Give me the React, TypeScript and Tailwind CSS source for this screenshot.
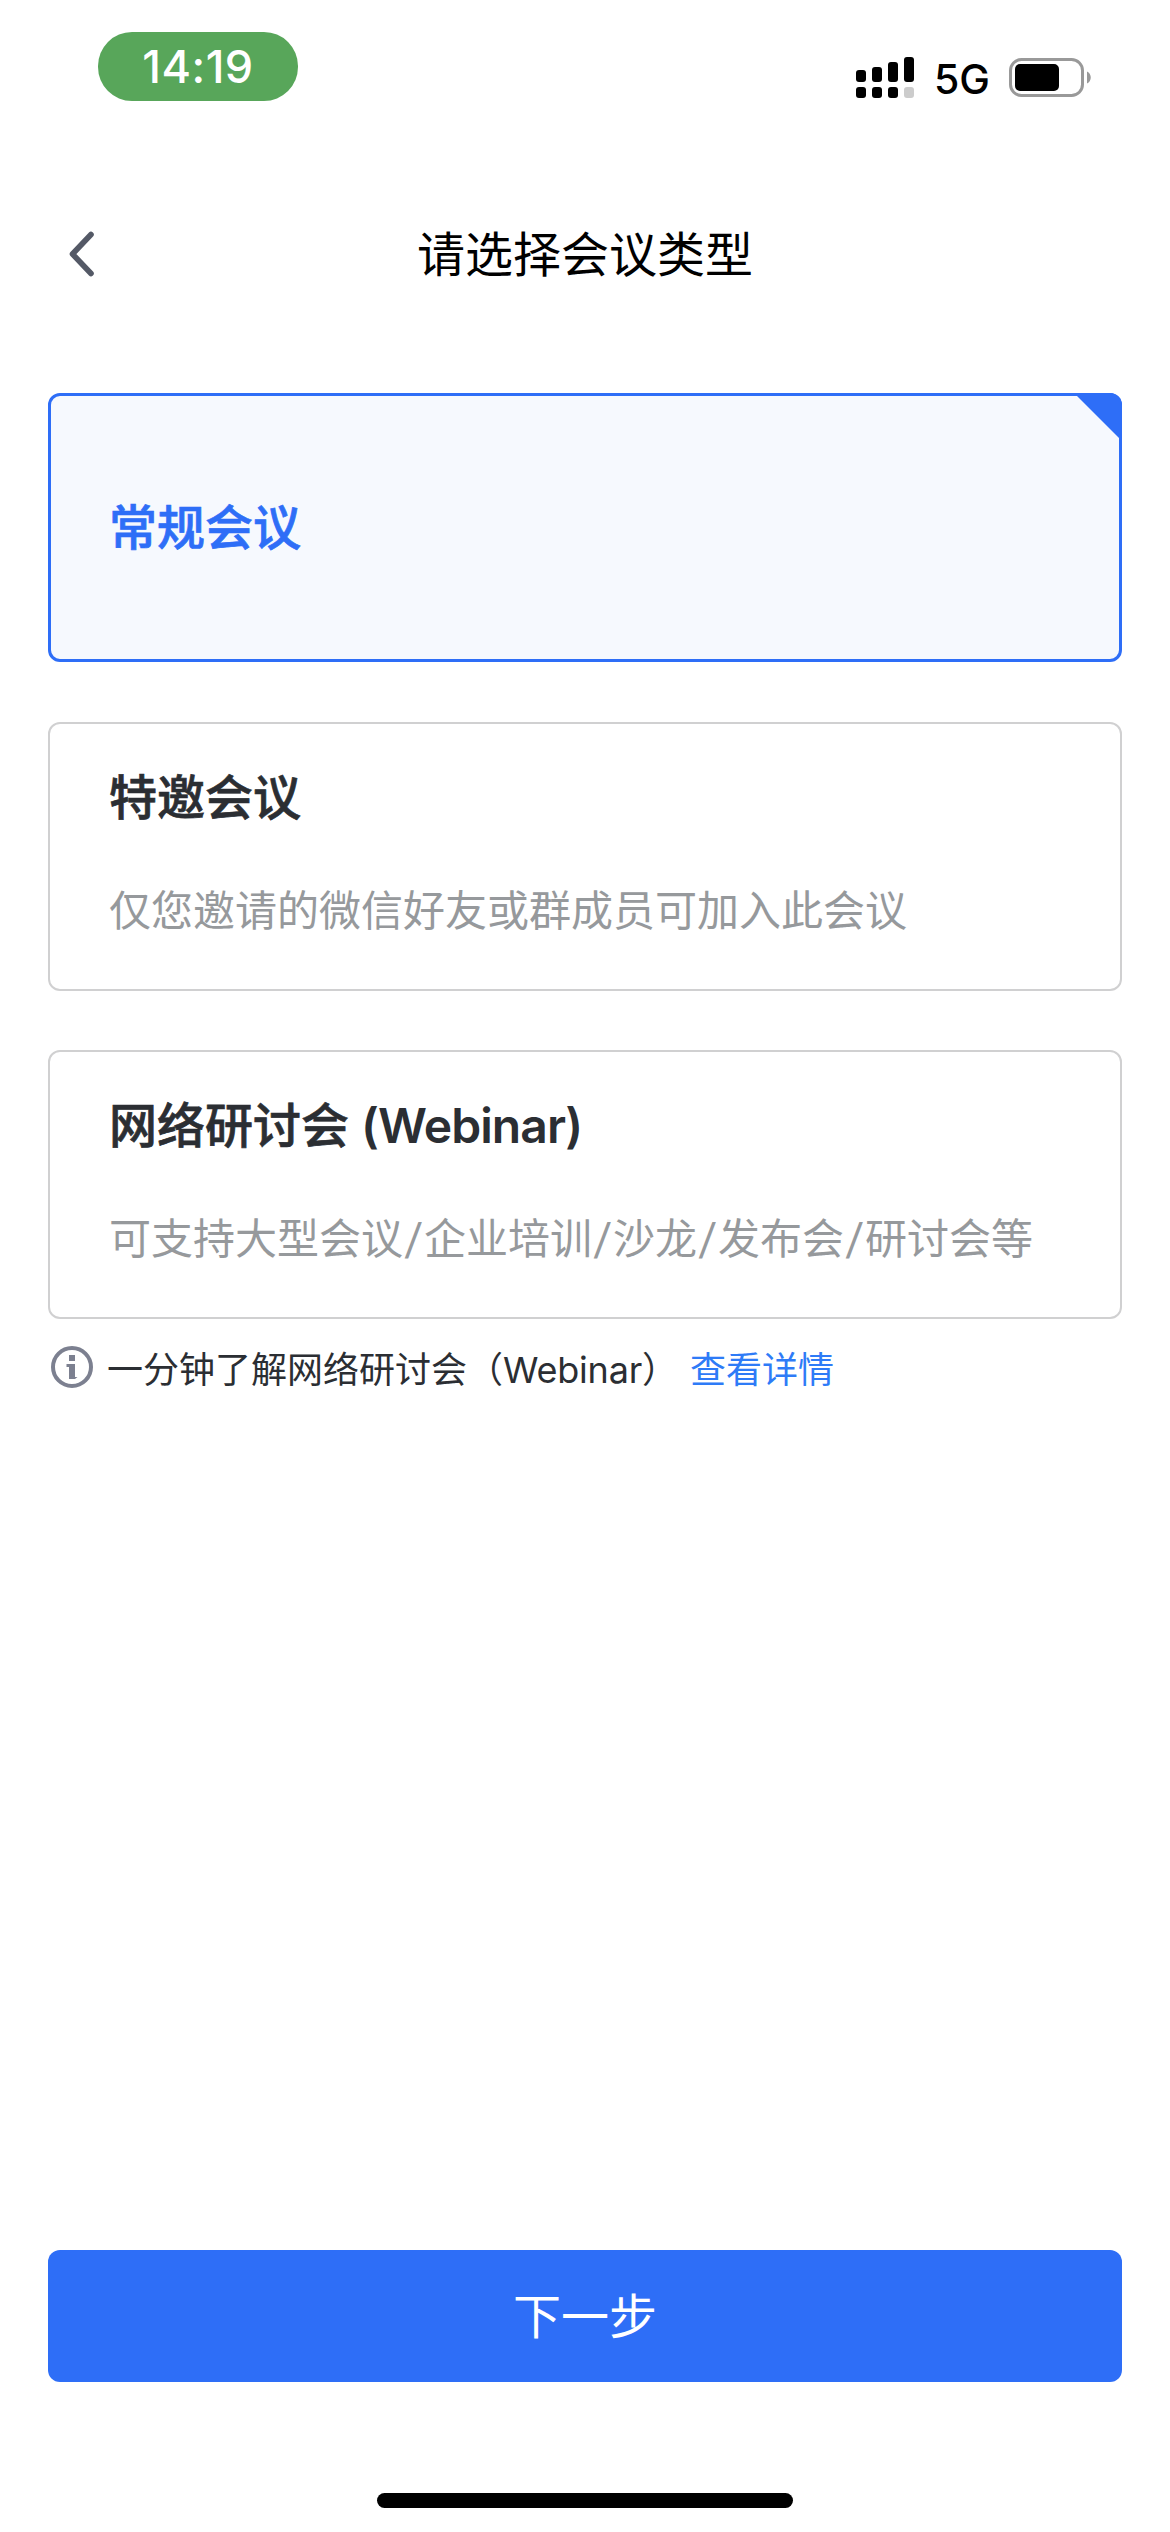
import React from "react";

function StatusBar() {
  return (
    <div className="flex h-[101px] justify-between pl-[98px] pr-[78px] pt-8">
      <div className="flex h-[69px] w-[200px] items-center justify-center rounded-[34px] bg-[#58a65a] text-[45px] font-[450] tracking-[0.5px] text-white">
        14:19
      </div>
      <div className="flex pt-[25px]">
        <svg width="58" height="41" viewBox="0 0 58 41">
          <rect x="0" y="13" width="10" height="12" rx="3" />
          <rect x="16" y="10" width="10" height="15" rx="3" />
          <rect x="32" y="5" width="10" height="20" rx="3" />
          <rect x="48" y="0" width="10" height="25" rx="3" />
          <rect x="0" y="30" width="10" height="11" rx="3" />
          <rect x="16" y="30" width="10" height="11" rx="3" />
          <rect x="32" y="30" width="10" height="11" rx="3" />
          <rect x="48" y="30" width="10" height="11" rx="3" fill="#cccccc" />
        </svg>
        <span className="ml-[20px] w-[75px] text-[41px] font-medium leading-[44px] text-black">5G</span>
        <svg width="83" height="41" viewBox="0 0 83 41">
          <rect x="1.5" y="2.5" width="72" height="36" rx="11" fill="none" stroke="#999999" strokeWidth="3" />
          <rect x="6" y="7" width="44" height="27" rx="5" />
          <path d="M78 14.5c5 2 5 10 0 12z" fill="#999999" />
        </svg>
      </div>
    </div>
  );
}

type CardProps = { title: React.ReactNode; desc: string };

function TypeCard({ title, desc }: CardProps) {
  return (
    <div className="h-[269px] rounded-xl border-2 border-[#d0d0d1] pl-[59px] pt-[39px]">
      <h2 className="h-[70px] text-[48px] font-medium leading-[70px] text-[#2b2e33] [-webkit-text-stroke:0.7px_#2b2e33]">{title}</h2>
      <p className="mt-[48px] h-[60px] whitespace-nowrap text-[42px] leading-[60px] text-[#96999c]">
        {desc.split("/").map((part, i) => (
          <React.Fragment key={part}>
            {i > 0 && <span className="inline-block w-[21px] -skew-x-6 text-center">/</span>}
            {part}
          </React.Fragment>
        ))}
      </p>
    </div>
  );
}

export default function App() {
  return (
    <div className="flex h-[2532px] w-[1170px] flex-col bg-white font-['Inter','Noto_Sans_CJK_SC',sans-serif] text-black">
      <StatusBar />
      <header className="mt-[93px] grid h-[120px] grid-cols-[200px_1fr_200px] items-center">
        <svg className="ml-[68px]" width="28" height="46" viewBox="0 0 28 46" fill="none" stroke="#545966" strokeWidth="5.6" strokeLinecap="round" strokeLinejoin="round">
          <path d="M23 3.5L4.5 23L23 42.5" />
        </svg>
        <h1 className="pt-[2px] text-center text-[48px] leading-[70px]">请选择会议类型</h1>
      </header>
      <main className="mx-12 mt-[79px] flex flex-col">
        <div className="relative flex h-[269px] items-center rounded-xl border-[3px] border-[#2e6ef7] bg-[#f6f9fe] pl-[58px]">
          <span className="text-[48px] font-medium leading-[70px] text-[#2e6ef7] [-webkit-text-stroke:0.7px_#2e6ef7]">常规会议</span>
          <svg className="absolute -right-[3px] -top-[3px]" width="48" height="48" viewBox="0 0 48 48">
            <path d="M0 0H36A12 12 0 0 1 48 12V48z" fill="#2e6ef7" />
          </svg>
        </div>
        <div className="mt-[60px]">
          <TypeCard title="特邀会议" desc="仅您邀请的微信好友或群成员可加入此会议" />
        </div>
        <div className="mt-[59px]">
          <TypeCard
            title={<>网络研讨会<span className="ml-3 font-semibold tracking-[-0.9px] [-webkit-text-stroke:0]">(Webinar)</span></>}
            desc="可支持大型会议/企业培训/沙龙/发布会/研讨会等"
          />
        </div>
        <div className="ml-[3px] mt-[22px] flex h-[52px] items-center whitespace-nowrap text-[36px] leading-[52px]">
          <svg width="42" height="42" viewBox="0 0 42 42" fill="none">
            <circle cx="21" cy="21" r="19" stroke="#7c8090" strokeWidth="4" />
            <path d="M18 9h6v6h-6zM15.5 18H24v13h2.5L24 33h-6V21h-2.5z" fill="#7c8090" />
          </svg>
          <span className="ml-[14px] w-[583px] pt-[5px] text-[#2b2e33]">
            一分钟了解网络研讨会（<span className="tracking-[-0.2px]">Webinar</span>）
          </span>
          <a className="pt-[5px] text-[#2e7bf7]">查看详情</a>
        </div>
      </main>
      <button className="mx-12 mt-auto h-[132px] shrink-0 rounded-xl bg-[#2e6ef7] pt-[2px] text-[48px] text-white">下一步</button>
      <div className="mx-auto mb-6 mt-[111px] h-[15px] w-[416px] shrink-0 rounded-full bg-black" />
    </div>
  );
}
